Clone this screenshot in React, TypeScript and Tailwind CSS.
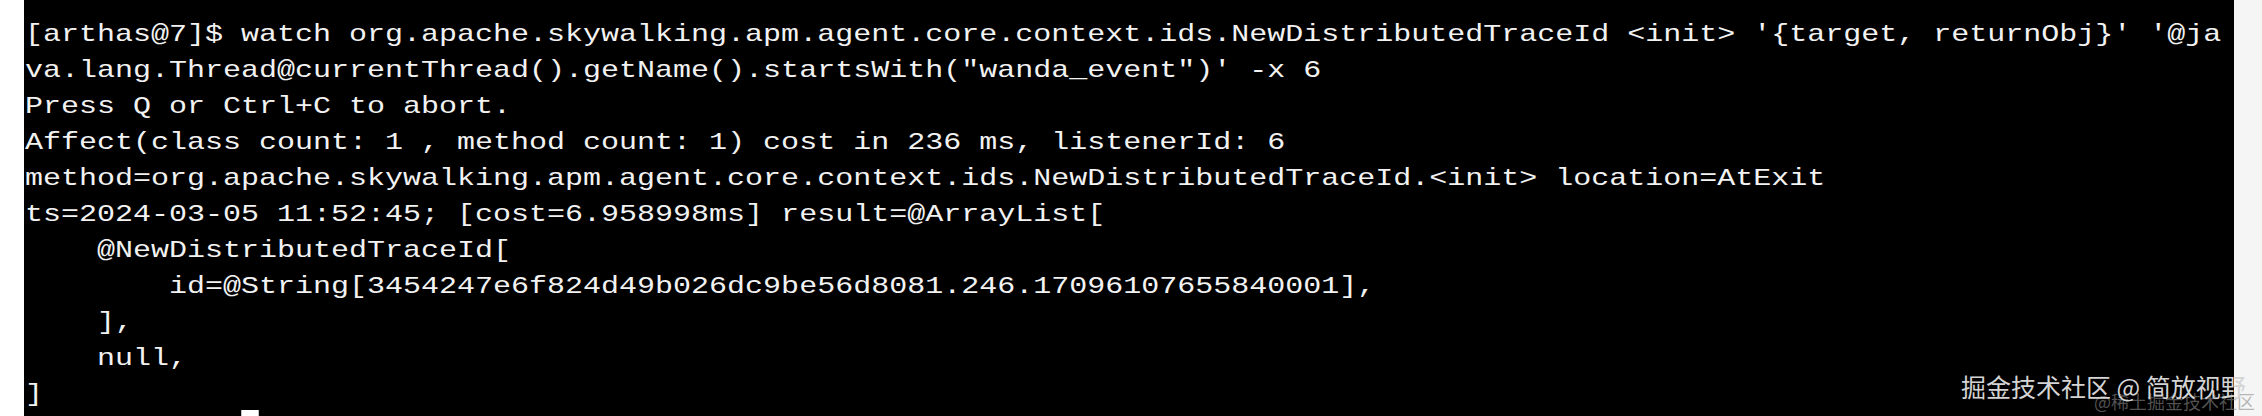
const lines = [
	"[arthas@7]$ watch org.apache.skywalking.apm.agent.core.context.ids.NewDistributedTraceId <init> '{target, returnObj}' '@ja",
	"va.lang.Thread@currentThread().getName().startsWith(\"wanda_event\")' -x 6",
	"Press Q or Ctrl+C to abort.",
	"Affect(class count: 1 , method count: 1) cost in 236 ms, listenerId: 6",
	"method=org.apache.skywalking.apm.agent.core.context.ids.NewDistributedTraceId.<init> location=AtExit",
	"ts=2024-03-05 11:52:45; [cost=6.958998ms] result=@ArrayList[",
	"    @NewDistributedTraceId[",
	"        id=@String[3454247e6f824d49b026dc9be56d8081.246.17096107655840001],",
	"    ],",
	"    null,",
	"]",
];

const App = () => {
	return (
		<div className="relative flex w-[2262px] h-[416px] overflow-hidden bg-white">
			<div className="w-[24px] shrink-0 bg-white" />
			<div className="w-[2210px] shrink-0 bg-black pl-[1px] pt-[17px] overflow-hidden">
				<div className="origin-top-left scale-x-[1.25] font-['Liberation_Mono',monospace] text-[24px] leading-[36px] text-[#f2f2f2] whitespace-pre">
					{lines.map((line, i) => (
						<div key={i}>{line}</div>
					))}
					<div>
						{"            "}
						<span className="inline-block align-top w-[14.4px] h-[30px] -translate-y-[3px] bg-white" />
					</div>
				</div>
			</div>
			<div className="flex-1 bg-[#f5f5f5]" />

			{/* watermarks */}
			<span className="absolute left-[2094px] top-[390px] font-['Noto_Sans_CJK_SC',sans-serif] text-[18px] leading-[22px] text-[#8a8a8a]/60 whitespace-nowrap">
				@稀土掘金技术社区
			</span>
			<span className="absolute left-[1961px] top-[369px] font-['Noto_Sans_CJK_SC',sans-serif] text-[25px] leading-[34px] text-[#d4d4d4] whitespace-nowrap">
				掘金技术社区 @ 简放视野
			</span>
		</div>
	);
};

export default App;
